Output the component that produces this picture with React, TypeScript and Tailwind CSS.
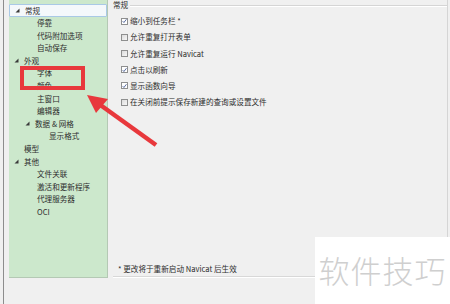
import React from "react"

const font = { fontFamily: '"Noto Sans CJK SC", "Noto Sans", sans-serif' }

type Node = { label: string; level: number; open?: boolean; selected?: boolean }

const tree: Node[] = [
  { label: "常规", level: 1, open: true, selected: true },
  { label: "停靠", level: 2 },
  { label: "代码附加选项", level: 2 },
  { label: "自动保存", level: 2 },
  { label: "外观", level: 1, open: true },
  { label: "字体", level: 2 },
  { label: "颜色", level: 2 },
  { label: "主窗口", level: 2 },
  { label: "编辑器", level: 2 },
  { label: "数据 & 网格", level: 2, open: true },
  { label: "显示格式", level: 3 },
  { label: "模型", level: 1 },
  { label: "其他", level: 1, open: true },
  { label: "文件关联", level: 2 },
  { label: "激活和更新程序", level: 2 },
  { label: "代理服务器", level: 2 },
  { label: "OCI", level: 2 },
]

const options = [
  { label: "缩小到任务栏 *", checked: true },
  { label: "允许重复打开表单", checked: false },
  { label: "允许重复运行 Navicat", checked: false },
  { label: "点击以刷新", checked: true },
  { label: "显示函数向导", checked: true },
  { label: "在关闭前提示保存新建的查询或设置文件", checked: false },
]

function Tri() {
  return (
    <svg width="5" height="5" viewBox="0 0 5 5" className="shrink-0">
      <path d="M4.5 0.5 L4.5 4.5 L0.5 4.5 Z" fill="#3a3a3a" />
    </svg>
  )
}

function TreeRow({ node }: { node: Node }) {
  const indent = node.level === 1 ? "pl-[5px]" : "pl-[16px]"
  const textPad = node.level === 3 ? "pl-[24px]" : node.open ? "pl-[5px]" : node.level === 1 ? "pl-[10px]" : "pl-[12px]"
  return (
    <div
      className={`h-[12.6px] flex items-center ${indent} ${
        node.selected ? "bg-[#f4f8fb] border border-[#a9c9e6] rounded-[1px]" : ""
      }`}
    >
      {node.open ? <Tri /> : null}
      <span className={`text-[7.6px] leading-none text-[#2d2d2d] whitespace-nowrap ${textPad}`}>{node.label}</span>
    </div>
  )
}

function Check({ checked }: { checked: boolean }) {
  return (
    <div
      className={`w-[7px] h-[7px] border border-[#8e8f8f] flex items-center justify-center shrink-0 ${
        checked ? "bg-white" : "bg-gradient-to-br from-[#dcdcdc] to-[#f6f6f6]"
      }`}
    >
      {checked ? (
        <svg width="6" height="6" viewBox="0 0 6 6">
          <path d="M0.8 3.2 L2.3 4.8 L5.3 0.9" stroke="#4a5f97" strokeWidth="1.1" fill="none" />
        </svg>
      ) : null}
    </div>
  )
}

export default function App() {
  return (
    <div className="w-[450px] h-[304px] bg-[#f0f0f0] relative overflow-hidden flex" style={font}>
      <div className="w-[9px] h-full flex">
        <div className="ml-[3px] w-px h-full bg-[#8d8d8d]" />
      </div>

      <div className="w-[99px] h-[278px] bg-[#cce8cc] border-r border-b border-[#b4c9b4] pt-[4px] shrink-0">
        {tree.map((n, i) => (
          <TreeRow key={i} node={n} />
        ))}
      </div>

      <div className="flex-1 ml-[5px] flex flex-col h-[278px]">
        <div className="flex-1 flex flex-col border-r border-[#d5d5d5] mr-[2px] mb-[8px]">
          <div className="relative h-[13px] flex items-start leading-none">
            <div className="absolute left-0 right-0 top-[5px] border-t border-[#d5d5d5] border-b border-b-white h-[2px]" />
            <span className="relative text-[7.6px] leading-none text-[#2d2d2d] bg-[#f0f0f0] pr-[2px] pt-[1px]">常规</span>
          </div>
          <div className="flex flex-col pl-[8px]">
            {options.map((o, i) => (
              <div key={i} className="h-[16.2px] flex items-center gap-[2px]">
                <Check checked={o.checked} />
                <span className="text-[7.6px] leading-none text-[#2d2d2d] whitespace-nowrap">{o.label}</span>
              </div>
            ))}
          </div>
        </div>
        <div className="pl-[5px] pb-[3px] text-[7.6px] leading-none text-[#2d2d2d] whitespace-nowrap">
          * 更改将于重新启动 Navicat 后生效
        </div>
        <div className="border-t border-[#d8d8d8] border-b border-b-white h-[2px]" />
      </div>

      {/* red highlight box */}
      <div className="absolute left-[20px] top-[66px] w-[65px] h-[24px] border-[4px] border-[#e8383c]" />

      {/* red arrow */}
      <svg className="absolute left-0 top-0" width="450" height="304" viewBox="0 0 450 304">
        <line x1="99" y1="104" x2="156" y2="145" stroke="#e8383c" strokeWidth="4.5" />
        <path d="M87 95 L108 99 L96 113 Z" fill="#e8383c" />
      </svg>

      {/* watermark */}
      <div className="absolute left-[315px] top-[237px] w-[135px] h-[67px] bg-white flex items-center justify-center">
        <span className="text-[31px] leading-none font-light text-[#cfcfcf] tracking-[1px] -mt-[3px]">软件技巧</span>
      </div>
    </div>
  )
}
